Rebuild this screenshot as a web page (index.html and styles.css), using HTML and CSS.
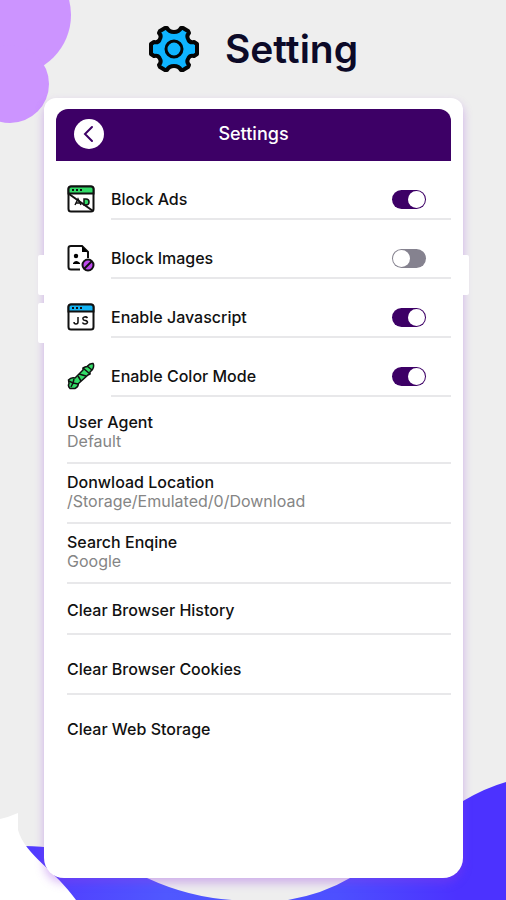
FILE: index.html
```html
<!DOCTYPE html>
<html lang="en">
<head>
<meta charset="utf-8">
<meta name="viewport" content="width=device-width, initial-scale=1">
<title>Setting</title>
<link rel="stylesheet" href="styles.css">
</head>
<body>
<svg class="blob" viewBox="0 0 80 130" aria-hidden="true"><circle cx="11" cy="15" r="60"/><circle cx="10" cy="84" r="39"/></svg>
<svg class="waves" viewBox="0 0 506 130" preserveAspectRatio="none" aria-hidden="true">
  <defs><linearGradient id="wave" x1="0" x2="1"><stop offset="0" stop-color="#5138ff"/><stop offset=".3" stop-color="#5058ff"/><stop offset=".65" stop-color="#4d50ff"/><stop offset=".9" stop-color="#4c32ff"/></linearGradient></defs>
  <path fill="url(#wave)" d="M24 76C70 76 112 90 147 108Q188 127 232 130H20ZM288 130Q323 124 350 108Q400 75 463 31Q485 18 506 12V130Z"/>
  <path fill="#fff" d="M0 49Q9 47 18 43V60C25 85 56 101 76 130H0Z"/>
</svg>

<header class="hero">
  <svg class="gear" viewBox="0 0 50 48" aria-hidden="true">
    <path d="M16 3L18 3Q20 7 25 7Q30 7 32 3L34 3L39 6L40 8Q37 11 39.500 15Q41 18 45 17L48 19V29L45 31Q41 30 39.500 33Q37 37 40 40L39 42L34 45H32Q30 41 25 41Q20 41 18 45H16L11 42L10 40Q13 37 10.500 33Q9 30 5 31L2 29V19L5 17Q9 18 10.500 15Q13 11 10 8L11 6Z"/>
    <circle cx="25" cy="24" r="8"/>
  </svg>
  <h1>Setting</h1>
</header>

<main class="phone">
  <i class="key key-left key-up"></i><i class="key key-left key-down"></i><i class="key key-right key-up"></i>
  <div class="bar">
    <button class="back" type="button" aria-label="Back"><svg viewBox="0 0 30 30"><path d="M18 8l-7 7 7 7"/></svg></button>
    <h2>Settings</h2>
  </div>

  <section class="toggles">
    <div class="toggle-row">
      <svg class="icon" viewBox="0 0 28 28" aria-hidden="true">
        <rect class="line white" x="1.5" y="1.5" width="25" height="25" rx="2.5"/><path class="line green" d="M1.5 8.5V4Q1.5 1.5 4 1.5H24Q26.5 1.5 26.5 4V8.5Z"/><path class="dots" d="M5 5h11"/>
        <path class="fine" d="M8 20l3-6 3 6M9 18h4"/><path class="fine green" d="M17 14h2q3 0 3 3t-3 3h-2z"/><path class="strike" d="M2 9l24 17"/>
      </svg>
      <div class="line-body"><label for="ads">Block Ads</label><input class="switch" id="ads" type="checkbox" checked></div>
    </div>
    <div class="toggle-row">
      <svg class="icon" viewBox="0 0 28 28" aria-hidden="true">
        <path class="line none" d="M13 25.500H4Q1.500 25.500 1.500 23V4Q1.500 2 4 2H15L21 8V14"/><path d="M15 2v6h6z"/><circle cx="9" cy="12" r="2.200"/><path d="M6 19q3-4 7 0v1H6z"/>
        <circle class="line violet" cx="21" cy="21" r="5.500"/><path class="strike" d="M17 25l8-8"/>
      </svg>
      <div class="line-body"><label for="images">Block Images</label><input class="switch" id="images" type="checkbox"></div>
    </div>
    <div class="toggle-row">
      <svg class="icon" viewBox="0 0 28 28" aria-hidden="true">
        <rect class="line white" x="1.5" y="1.5" width="25" height="25" rx="2.5"/><path class="line blue" d="M1.500 8.500V4Q1.500 1.500 4 1.500H24Q26.500 1.500 26.500 4V8.500Z"/><path class="dots" d="M5 5h11"/>
        <path class="fine none" d="M11 14v5q0 2-2 2t-2-2M20.500 15q-1-1.500-3-1t-1.500 2q0 1.200 2.300 1.500t2.200 2q-.5 1.500-2.500 1.500t-2.500-1.500"/>
      </svg>
      <div class="line-body"><label for="js">Enable Javascript</label><input class="switch" id="js" type="checkbox" checked></div>
    </div>
    <div class="toggle-row">
      <svg class="icon" viewBox="0 0 28 28" aria-hidden="true">
        <path class="fine green" d="M8 16L16 8 16 6l2-1 2-.5Q23 1 26 1.500 27.500 4 25.500 7.500L23 10v2l-2 1-9.500 8.500Q11 25.500 8 26.500H3Q.5 24 2 21.500L1.500 18Q4 15 8 16Z"/>
        <path class="fine none" d="M16 6l7 6M12 12l7 2M11 14l3 5M2 19l4 2-2 4M7 17l-1 4 5 1M20 4l5 4"/>
      </svg>
      <div class="line-body"><label for="color">Enable Color Mode</label><input class="switch" id="color" type="checkbox" checked></div>
    </div>
  </section>

  <section class="options">
    <button class="option" type="button"><strong>User Agent</strong><span>Default</span></button>
    <button class="option" type="button"><strong>Donwload Location</strong><span>/Storage/Emulated/0/Download</span></button>
    <button class="option" type="button"><strong>Search Enqine</strong><span>Google</span></button>
  </section>

  <section class="actions">
    <button class="action" type="button">Clear Browser History</button>
    <button class="action" type="button">Clear Browser Cookies</button>
    <button class="action" type="button">Clear Web Storage</button>
  </section>
</main>
</body>
</html>
```
FILE: styles.css
```css
* { box-sizing: border-box; }

body {
  position: relative;
  display: flex;
  flex-direction: column;
  min-height: 100vh;
  margin: 0;
  padding: 0 43px 22px 44px;
  overflow-x: hidden;
  background: #eee;
  color: #111;
  font: 500 16px/20px Inter, "Liberation Sans", sans-serif;
}

h1, h2 { margin: 0; }

button {
  border: 0;
  padding: 0;
  background: none;
  color: inherit;
  font: inherit;
  text-align: left;
}

/* Background shapes */
.blob { position: absolute; top: 0; left: 0; width: 80px; fill: #cc94ff; }
.waves { position: absolute; bottom: 0; left: 0; width: 100%; height: 130px; }

.hero {
  position: relative;
  display: flex;
  align-items: center;
  justify-content: center;
  gap: 26px;
  height: 98px;
}
.gear { width: 50px; height: 48px; fill: #0eb4ff; stroke: #050505; stroke-width: 4; stroke-linejoin: round; }
.gear circle { stroke-width: 3; }
h1 { color: #0c0a28; font-size: 39px; font-weight: 600; line-height: 48px; }

.phone {
  position: relative;
  flex: 1;
  padding: 11px 12px;
  border-radius: 20px;
  border-top-left-radius: 12px;
  border-top-right-radius: 12px;
  background: #fff;
  box-shadow: 0 5px 10px rgba(150, 60, 225, .35);
}
.key { position: absolute; width: 6px; height: 40px; background: #fff; }
.key-left { right: 100%; border-radius: 2px 0 0 2px; }
.key-right { left: 100%; border-radius: 0 2px 2px 0; }
.key-up { top: 157px; }
.key-down { top: 205px; }

.bar {
  display: grid;
  grid-template-columns: 30px 1fr 30px;
  align-items: center;
  height: 52px;
  padding: 0 18px 2px;
  border-radius: 12px 12px 0 0;
  background: #3d0066;
  color: #fff;
}
.back { height: 30px; border-radius: 50%; background: #fff; }
.back svg { display: block; fill: none; stroke: #3d0066; stroke-width: 2; stroke-linecap: round; }
h2 { font-size: 18px; font-weight: 500; line-height: 24px; text-align: center; }

.toggle-row { display: flex; align-items: flex-end; height: 59px; padding-left: 11px; }
.icon { flex: none; width: 28px; height: 28px; margin: 0 16px 7px 0; }
.line-body {
  display: flex;
  flex: 1;
  align-items: center;
  justify-content: space-between;
  height: 40px;
  padding-right: 25px;
  border-bottom: 2px solid #e8e8ea;
}
.line, .fine, .strike, .dots { stroke: #111; stroke-width: 2; }
.fine { stroke-width: 1.500; fill: none; }
.dots { stroke-dasharray: 2 2; }
.white { fill: #fff; }
.none { fill: none; }
.green { fill: #32dc68; }
.blue { fill: #14b5f5; }
.violet { fill: #bd48ef; }

.switch {
  display: flex;
  width: 34px;
  height: 19px;
  margin: 0;
  padding: 1px;
  border-radius: 10px;
  background: #85828f;
  appearance: none;
}
.switch::before { content: ""; width: 17px; height: 17px; border-radius: 50%; background: #fff; }
.switch:checked { justify-content: flex-end; background: #3d0066; }

.options { padding: 7px 0 0 11px; }
.option {
  display: flex;
  flex-direction: column;
  width: 100%;
  height: 60px;
  padding-top: 9px;
  border-bottom: 2px solid #e8e8ea;
  line-height: 19px;
}
.option strong { font-weight: 500; }
.option span { color: #858585; font-weight: 400; }

.actions { padding-left: 11px; }
.action { display: block; width: 100%; height: 60px; padding-top: 10px; border-bottom: 2px solid #e8e8ea; }
.action:first-child { height: 51px; padding-top: 2px; }
.action:last-child { padding-top: 8px; border-bottom: 0; }
```
